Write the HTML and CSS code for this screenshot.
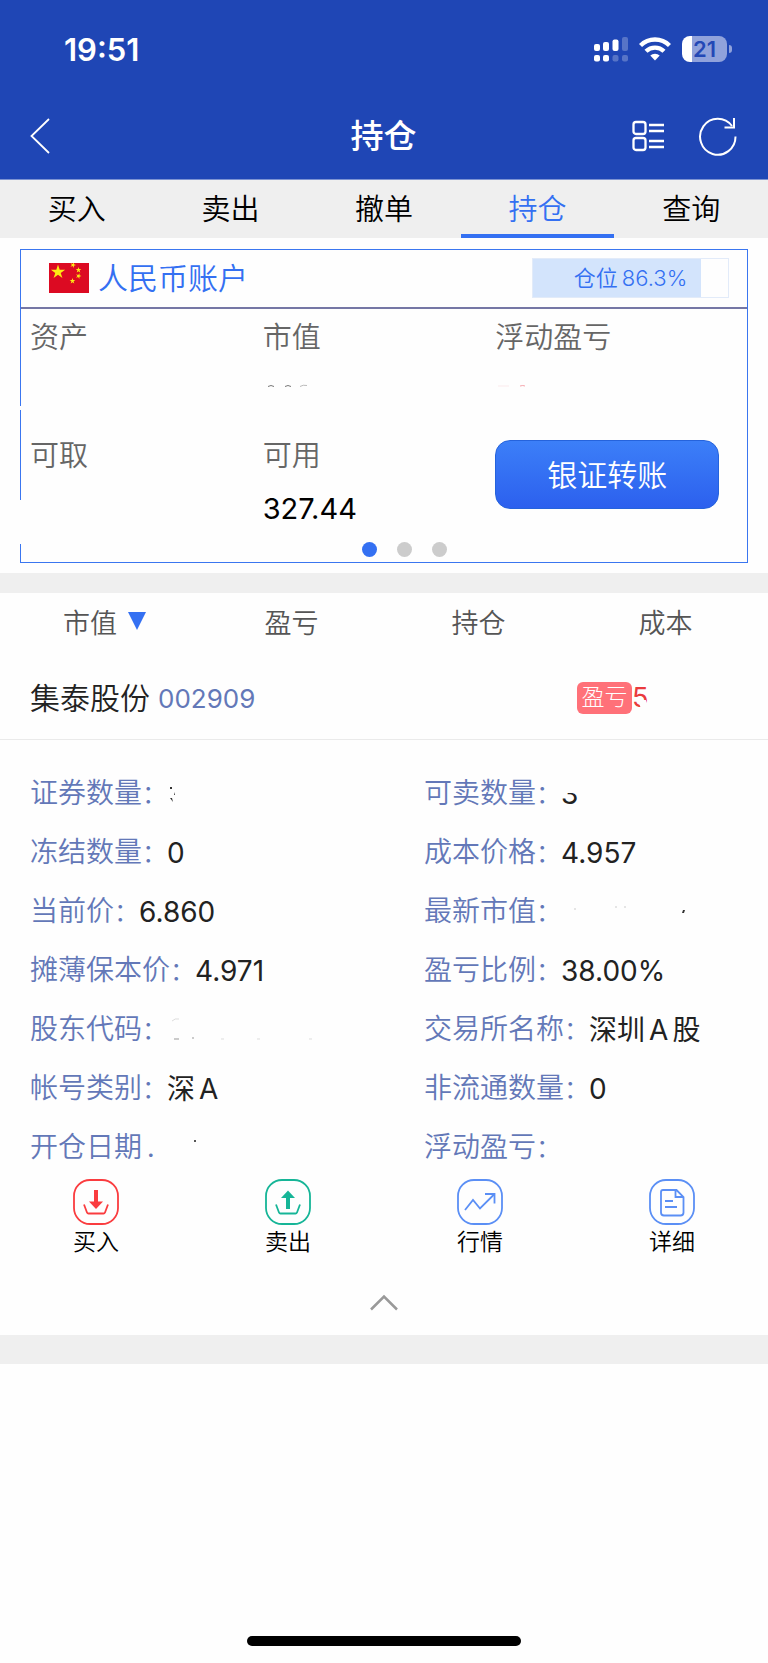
FILE: index.html
```html
<!DOCTYPE html>
<html lang="zh-CN">
<head>
<meta charset="utf-8">
<meta name="viewport" content="width=device-width, initial-scale=1">
<title>持仓</title>
<link rel="stylesheet" href="styles.css">
</head>
<body>
<header class="top">
  <div class="status">
    <span class="time">19:51</span>
    <div class="status-icons">
      <svg width="34" height="25" viewBox="0 0 34 25" fill="#fff" aria-hidden="true">
        <rect x="0" y="7" width="6" height="7" rx="2"/><rect x="9" y="5" width="6" height="9" rx="2"/><rect x="18.500" y="2.500" width="6" height="11.500" rx="2"/>
        <rect x="28" y="0" width="6" height="14" rx="2" opacity=".25"/>
        <rect x="0" y="18" width="6" height="6.500" rx="2"/><rect x="9" y="18" width="6" height="6.500" rx="2"/>
        <rect x="18.500" y="18" width="6" height="6.500" rx="2" opacity=".25"/><rect x="28" y="18" width="6" height="6.500" rx="2" opacity=".25"/>
      </svg>
      <svg class="wifi" width="32" height="24" viewBox="0 0 32 24" aria-hidden="true">
        <g fill="none" stroke="#fff" stroke-width="4.300"><path d="M1.500 8.500a20.500 20.500 0 0 1 29 0"/><path d="M7 14.300a12.800 12.800 0 0 1 18 0"/></g>
        <path d="M11.300 18.600a6.800 6.800 0 0 1 9.400 0L16 23.600z" fill="#fff"/>
      </svg>
      <div class="battery"><span>21</span></div>
    </div>
  </div>
  <div class="bar">
    <button class="icon-btn" aria-label="返回"><svg width="20" height="36" viewBox="0 0 20 36" fill="none" stroke="#fff" stroke-width="1.800"><path d="M19 1 1.500 18 19 35"/></svg></button>
    <h1>持仓</h1>
    <div class="bar-actions">
      <button class="icon-btn" aria-label="列表"><svg width="33" height="32" viewBox="0 0 33 32" fill="none" stroke="#fff" stroke-width="2.300"><rect x="1.500" y="2" width="12" height="12" rx="2.500"/><rect x="1.500" y="18" width="12" height="12" rx="2.500"/><path d="M17 5h15M17 11h15M17 21h15M17 27h15"/></svg></button>
      <button class="icon-btn" aria-label="刷新"><svg width="38" height="40" viewBox="0 0 38 40" fill="none" stroke="#fff" stroke-width="2"><path d="M36.500 20.500A17.700 18 0 1 1 33 10"/><path d="M35 2v9.500H25.500"/></svg></button>
    </div>
  </div>
</header>
<nav class="tabs">
  <a href="#buy">买入</a><a href="#sell">卖出</a><a href="#cancel">撤单</a><a href="#hold" class="active">持仓</a><a href="#query">查询</a>
</nav>
<main>
  <section class="account-wrap">
    <div class="account">
      <div class="account-head">
        <svg width="40" height="30" viewBox="0 0 40 30" aria-hidden="true">
          <defs><path id="star" d="M0-1 .225-.309.951-.309.363.118.588.809 0 .382-.588.809-.363.118-.951-.309-.225-.309z"/></defs>
          <rect width="40" height="30" fill="#dc0a22"/>
          <g fill="#fcea14"><use href="#star" transform="translate(9 9) scale(7.500)"/><use href="#star" transform="translate(24 2) rotate(20) scale(3)"/><use href="#star" transform="translate(29.500 7) scale(3)"/><use href="#star" transform="translate(29.500 13) rotate(20) scale(3)"/><use href="#star" transform="translate(23.500 18) scale(3)"/></g>
        </svg>
        <h2>人民币账户</h2>
        <div class="ratio"><i style="width:86.3%"></i><span>仓位<b>86.3%</b></span></div>
      </div>
      <div class="figures">
        <div class="fig"><span>资产</span></div>
        <div class="fig"><span>市值</span>
          <svg class="trace" width="60" height="8" fill="none" stroke="#777"><path d="M5 2.500q3-2 6 0M22 2.500q3-2 6 0" /><path d="M37 2.500q3-2 7-1" stroke="#bbb"/></svg>
        </div>
        <div class="fig"><span>浮动盈亏</span>
          <svg class="trace" width="60" height="8" fill="none"><path d="M3 2h11" stroke="#fbeaec"/><path d="M25 2q3-1 5 0" stroke="#f6a5ac"/></svg>
        </div>
        <div class="fig"><span>可取</span></div>
        <div class="fig"><span>可用</span><strong>327.44</strong></div>
        <div class="fig"><button class="transfer">银证转账</button></div>
      </div>
      <div class="dots"><i class="on"></i><i></i><i></i></div>
    </div>
  </section>
  <div class="sort">
    <button>市值<svg width="18" height="18" viewBox="0 0 18 18" aria-hidden="true"><path d="M0 0h18L9 18z" fill="#3470f2"/></svg></button><button>盈亏</button><button>持仓</button><button>成本</button>
  </div>
  <article class="stock">
    <div class="stock-head">
      <h3>集泰股份</h3><span class="code">002909</span>
      <div class="profit"><span class="tag">盈亏</span><span class="worn-five">5</span></div>
    </div>
    <dl class="details">
      <div><dt>证券数量<i>：</i></dt><dd><svg width="10" height="20" fill="#333" aria-hidden="true"><path d="M3 3h2v2H3zM7 8l1 3H7zM3 14h2l1 4z"/></svg></dd></div>
      <div><dt>可卖数量<i>：</i></dt><dd class="worn-three">3</dd></div>
      <div><dt>冻结数量<i>：</i></dt><dd>0</dd></div>
      <div><dt>成本价格<i>：</i></dt><dd>4.957</dd></div>
      <div><dt>当前价<i>：</i></dt><dd>6.860</dd></div>
      <div><dt>最新市值<i>：</i></dt><dd><svg width="130" height="20" aria-hidden="true"><path d="M13 7h2M54 5h2M63 5h2" stroke="#ccc"/><path d="M122 8h2l-1 3h-2z" fill="#333"/></svg></dd></div>
      <div><dt>摊薄保本价<i>：</i></dt><dd>4.971</dd></div>
      <div><dt>盈亏比例<i>：</i></dt><dd>38.00%</dd></div>
      <div><dt>股东代码<i>：</i></dt><dd><svg width="150" height="24" fill="none" aria-hidden="true"><path d="M5 3q3-3 7-2M54 21h3M90 21h3M142 21h3" stroke="#ddd"/><path d="M7 21h5M25 20h2" stroke="#999"/></svg></dd></div>
      <div><dt>交易所名称<i>：</i></dt><dd>深圳<b>A</b>股</dd></div>
      <div><dt>帐号类别<i>：</i></dt><dd>深<b>A</b></dd></div>
      <div><dt>非流通数量<i>：</i></dt><dd>0</dd></div>
      <div><dt>开仓日期<i class="point">.</i></dt><dd><svg width="40" height="20" aria-hidden="true"><path d="M27 2h2v2h-2z" fill="#555"/></svg></dd></div>
      <div><dt>浮动盈亏<i>：</i></dt><dd></dd></div>
    </dl>
    <div class="actions">
      <a href="#buy"><svg width="46" height="46" viewBox="0 0 46 46" fill="none" stroke="#fa3c3f" stroke-width="1.800"><rect x="1" y="1" width="44" height="44" rx="16"/><path d="m11 25.500 3 8q.4 1 1.500 1h15q1.100 0 1.500-1l3-8"/><path d="M23 11v12" stroke-width="4"/><path d="M16 22.500h14L23 30z" fill="#fa3c3f" stroke="none"/></svg>买入</a>
      <a href="#sell"><svg width="46" height="46" viewBox="0 0 46 46" fill="none" stroke="#16b597" stroke-width="1.800"><rect x="1" y="1" width="44" height="44" rx="16"/><path d="m11 25.500 3 8q.4 1 1.500 1h15q1.100 0 1.500-1l3-8"/><path d="M23 18v12" stroke-width="4"/><path d="M16 19h14l-7-7.500z" fill="#16b597" stroke="none"/></svg>卖出</a>
      <a href="#quote"><svg width="46" height="46" viewBox="0 0 46 46" fill="none" stroke="#5b8ff5" stroke-width="1.800"><rect x="1" y="1" width="44" height="44" rx="16"/><path d="m8 31 8-10 7 8.500 14-14"/><path d="M28 15h9.500v9.500"/></svg>行情</a>
      <a href="#detail"><svg width="46" height="46" viewBox="0 0 46 46" fill="none" stroke="#5b8ff5" stroke-width="1.800"><rect x="1" y="1" width="44" height="44" rx="16"/><path d="M14 11h13.500l7 7v15.500a3 3 0 0 1-3 3H15a3 3 0 0 1-3-3V13a2 2 0 0 1 2-2zM26.500 11.500v6.500h8M16 22h8M16 28h12"/></svg>详细</a>
    </div>
    <button class="collapse" aria-label="收起"><svg width="28" height="17" viewBox="0 0 28 17" fill="none" stroke="#999" stroke-width="2.500"><path d="M1 15.500 14 2.500l13 13"/></svg></button>
  </article>
</main>
<footer><div class="home"></div></footer>
</body>
</html>
```
FILE: styles.css
```css
* { box-sizing: border-box; }
body {
  margin: 0;
  min-height: 100vh;
  display: flex;
  flex-direction: column;
  background: #fefefe;
  color: #000;
  font-family: Inter, "Noto Sans CJK SC", sans-serif;
  font-weight: 350;
}
h1, h2, h3, dl, dd { margin: 0; font-weight: inherit; }
b { font-weight: inherit; }
i { font-style: normal; }
svg { display: block; flex: none; }
a { color: inherit; text-decoration: none; }
button { border: 0; padding: 0; background: none; font: inherit; color: inherit; }

.top { background: #1f46b5; color: #fff; height: 180px; border-bottom: 1px solid #7d93d2; }
.status { display: flex; justify-content: space-between; align-items: center; height: 98px; padding: 0 41px 0 64px; }
.time { font-size: 31px; font-weight: 600; }
.status-icons { display: flex; align-items: center; gap: 11px; }
.battery {
  position: relative;
  width: 45px;
  height: 26px;
  border-radius: 8px;
  background: linear-gradient(90deg, #fff 10px, #90a2db 10px);
  color: #2348b6;
  font-size: 22px;
  font-weight: 600;
  line-height: 26px;
  text-align: center;
}
.battery::after {
  content: "";
  position: absolute;
  right: -5px;
  top: 9px;
  width: 3px;
  height: 8px;
  border-radius: 0 4px 4px 0;
  background: #90a2db;
}
.bar { display: grid; grid-template-columns: 1fr auto 1fr; align-items: center; height: 76px; padding: 0 31px 0 30px; }
.bar h1 { font-size: 33px; font-weight: 500; line-height: 48px; }
.bar-actions { display: flex; align-items: center; justify-content: flex-end; gap: 34px; }
.icon-btn { justify-self: start; }

.tabs { display: flex; height: 58px; background: #efefef; font-size: 29px; }
.tabs a { flex: 1; text-align: center; line-height: 60px; }
.tabs .active { color: #3470f2; border-bottom: 4px solid #3470f2; }

.account-wrap { padding: 11px 20px 10px; border-bottom: 20px solid #efefef; }
.account { position: relative; border: 1px solid #3a76f0; height: 314px; }
.account::before, .account::after { content: ""; position: absolute; left: -1px; width: 1px; background: #fefefe; }
.account::before { top: 156px; height: 4px; }
.account::after { top: 250px; height: 44px; }
.account-head { display: flex; align-items: center; height: 59px; padding: 0 18px 2px 28px; border-bottom: 2px solid #7577a5; }
.account-head h2 { margin-left: 9px; font-size: 30px; line-height: 40px; color: #3470f2; }
.ratio { position: relative; margin-left: auto; width: 197px; height: 40px; border: 1px solid #e2ebf9; color: #3470f2; font-size: 22px; line-height: 38px; text-align: center; }
.ratio i { position: absolute; left: 0; top: 0; bottom: 0; background: #d3e4fc; }
.ratio span { position: relative; }
.ratio b { margin-left: 4px; }
.figures { display: grid; grid-template-columns: repeat(3, 1fr); grid-auto-rows: 118px; padding: 9px 19px 0 9px; }
.fig { font-size: 29px; line-height: 40px; color: #666; }
.fig span, .fig strong { display: block; }
.fig strong { margin-top: 13px; font-size: 29px; font-weight: 400; color: #000; }
.trace { margin-top: 26px; }
.transfer {
  width: 224px;
  height: 69px;
  margin-top: 4px;
  border: 1px solid #2563dc;
  border-radius: 15px;
  background: linear-gradient(#3c7ff8, #2c60ee);
  color: #fff;
  font-size: 30px;
}
.dots { position: absolute; left: 341px; bottom: 5px; display: flex; gap: 20px; }
.dots i { width: 15px; height: 15px; border-radius: 50%; background: #ccc; }
.dots .on { background: #3470f2; }

.sort { display: flex; height: 60px; padding: 0 9px 4px 11px; font-size: 27px; color: #555; }
.sort button { flex: 1; display: flex; align-items: center; justify-content: center; gap: 11px; }
.stock { border-bottom: 29px solid #efefef; }
.stock-head { display: flex; align-items: center; height: 87px; padding: 4px 0 0 30px; border-bottom: 1px solid #eaeaea; }
.stock-head h3 { font-size: 30px; color: #222; line-height: 42px; }
.code { margin-left: 8px; font-size: 26px; font-weight: 400; color: #6378b8; line-height: 42px; padding-top: 2px; }
.profit { display: flex; align-items: center; margin-left: auto; width: 191px; }
.tag { width: 55px; height: 32px; border-radius: 6px; background: #ff7179; color: #fff; font-size: 23px; line-height: 31px; text-align: center; font-weight: 300; }
.worn-five { position: relative; font-size: 27px; font-weight: 400; line-height: 36px; color: #ea3a3d; }
.worn-five::after { content: ""; position: absolute; right: 0; top: 20px; width: 8px; height: 12px; background: #fefefe; transform: skewX(20deg); }
.details { display: grid; grid-template-columns: 1fr 1fr; column-gap: 50px; padding: 24px 0 1px 30px; font-size: 28px; }
.details div { display: flex; align-items: center; height: 59px; }
.details dt { color: #6378b8; line-height: 40px; white-space: nowrap; }
.details dt i { font-size: 25px; }
.details .point { display: inline-block; width: 25px; padding-left: 5px; font-weight: 500; }
.details dd { color: #222; font-weight: 400; line-height: 40px; white-space: nowrap; }
.details b { margin: 0 4px; }
.details .worn-three { position: relative; }
.worn-three::after { content: ""; position: absolute; left: 0; top: 6px; width: 100%; height: 13px; background: #fefefe; }
.actions { display: flex; font-size: 23px; line-height: 34px; margin-top: 1px; }
.actions a { flex: 1; display: flex; flex-direction: column; align-items: center; }
.collapse { display: flex; justify-content: center; width: 100%; padding: 35px 0 24px; }
footer { margin-top: auto; padding-bottom: 17px; }
.home { width: 274px; height: 10px; margin: 0 auto; border-radius: 5px; background: #000; }
```
